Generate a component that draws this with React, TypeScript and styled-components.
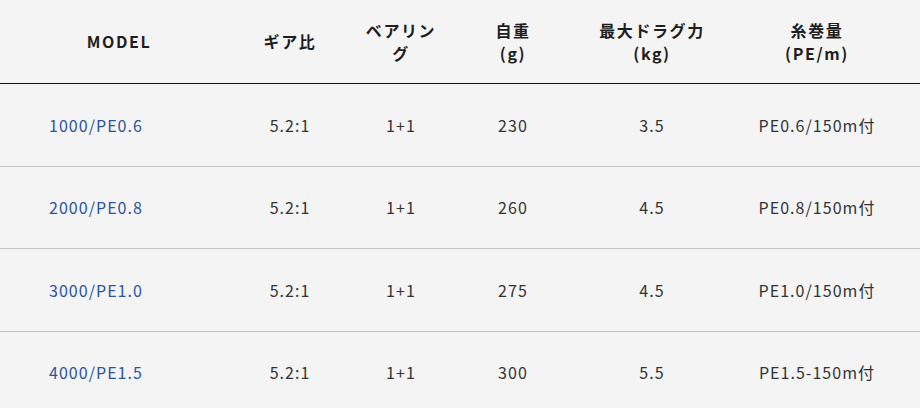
import styled, { createGlobalStyle } from 'styled-components';

const GlobalStyle = createGlobalStyle`
  html, body {
    margin: 0;
    padding: 0;
    background: #f4f4f4;
  }
  body {
    font-family: "Noto Sans CJK JP", "Noto Sans", sans-serif;
    color: #333;
  }
`;

type Spec = {
  model: string;
  gear: string;
  bearing: string;
  weight: string;
  drag: string;
  line: string;
};

const specs: Spec[] = [
  { model: '1000/PE0.6', gear: '5.2:1', bearing: '1+1', weight: '230', drag: '3.5', line: 'PE0.6/150m付' },
  { model: '2000/PE0.8', gear: '5.2:1', bearing: '1+1', weight: '260', drag: '4.5', line: 'PE0.8/150m付' },
  { model: '3000/PE1.0', gear: '5.2:1', bearing: '1+1', weight: '275', drag: '4.5', line: 'PE1.0/150m付' },
  { model: '4000/PE1.5', gear: '5.2:1', bearing: '1+1', weight: '300', drag: '5.5', line: 'PE1.5-150m付' },
];

const widths = [238, 104, 118, 106, 172, 158, 24];

const App = () => {
  return (
    <>
      <GlobalStyle />
      <SpecTable>
        <colgroup>
          {widths.map((w, i) => (
            <col key={i} style={{ width: w }} />
          ))}
        </colgroup>
        <thead>
          <tr>
            <HeadCell>MODEL</HeadCell>
            <HeadCell>ギア比</HeadCell>
            <HeadCell>
              ベアリン
              <br />グ
            </HeadCell>
            <HeadCell>
              自重
              <br />(g)
            </HeadCell>
            <HeadCell>
              最大ドラグ力
              <br />(kg)
            </HeadCell>
            <HeadCell>
              糸巻量
              <br />(PE/m)
            </HeadCell>
            <HeadCell />
          </tr>
        </thead>
        <tbody>
          {specs.map((s) => (
            <Row key={s.model}>
              <ModelCell>
                <ModelLink href="#">{s.model}</ModelLink>
              </ModelCell>
              <Cell>{s.gear}</Cell>
              <Cell>{s.bearing}</Cell>
              <Cell>{s.weight}</Cell>
              <Cell>{s.drag}</Cell>
              <Cell>{s.line}</Cell>
              <Cell />
            </Row>
          ))}
        </tbody>
      </SpecTable>
    </>
  );
};

export default App;

const SpecTable = styled.table`
  width: 920px;
  table-layout: fixed;
  border-collapse: collapse;
  border-spacing: 0;
`;

const HeadCell = styled.th`
  height: 83px;
  padding: 0;
  text-align: center;
  vertical-align: middle;
  font-size: 16px;
  font-weight: 700;
  line-height: 23px;
  letter-spacing: 0.1em;
  color: #1e1e1e;
  border-bottom: 1px solid #111;
`;

const Row = styled.tr`
  & + & td {
    border-top: 1px solid #c4c4c4;
  }
`;

const Cell = styled.td`
  height: 81.5px;
  padding: 0;
  text-align: center;
  vertical-align: middle;
  font-size: 16px;
  line-height: 22px;
  letter-spacing: 0.065em;
  color: #333;
`;

const ModelCell = styled(Cell)`
  text-align: left;
  padding-left: 49px;
`;

const ModelLink = styled.a`
  color: #2b539e;
  text-decoration: none;
`;
